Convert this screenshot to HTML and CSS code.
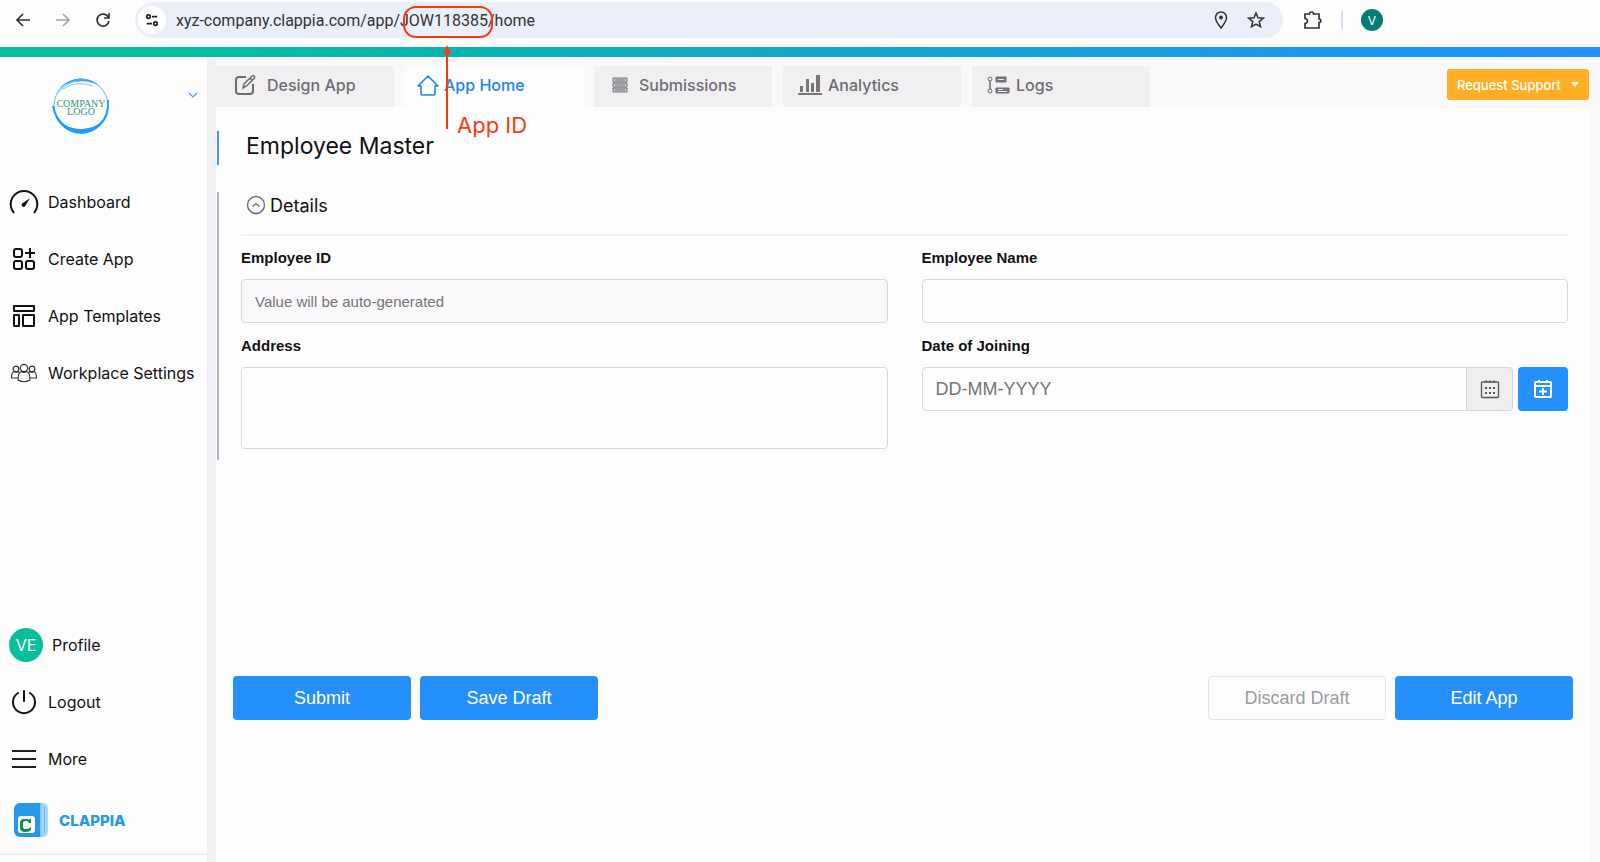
FILE: index.html
```html
<!DOCTYPE html>
<html lang="en">
  <head>
    <meta charset="UTF-8" />
    <meta name="viewport" content="width=device-width, initial-scale=1.0" />
    <title>Employee Master</title>
    <link rel="stylesheet" href="styles.css">
  </head>
  <body>
    <header class="browser-bar">
      <button type="button" class="icon-btn" aria-label="Back">
        <svg width="16" height="16" viewBox="0 0 16 16" fill="none" stroke="#333" stroke-width="1.700"><path d="M15 8H2M8 2L2 8l6 6" /></svg>
      </button>
      <button type="button" class="icon-btn" aria-label="Forward">
        <svg width="16" height="16" viewBox="0 0 16 16" fill="none" stroke="#a5a5a5" stroke-width="1.700"><path d="M1 8h13M8 2l6 6-6 6" /></svg>
      </button>
      <button type="button" class="icon-btn" aria-label="Reload">
        <svg width="16" height="16" viewBox="0 0 16 16" fill="none" stroke="#333" stroke-width="1.700"><path d="M13.500 5.500A6 6 0 1 0 14 9M14 1v5H9" /></svg>
      </button>
      <div class="address-bar">
        <button type="button" class="site-info" aria-label="Site information">
          <svg width="14" height="14" viewBox="0 0 16 16" fill="none" stroke="#222" stroke-width="2"><circle cx="4" cy="4" r="2" /><path d="M8 4h6M2 12h6" /><circle cx="12" cy="12" r="2" /></svg>
        </button>
        <input type="text" class="url" aria-label="Address" value="xyz-company.clappia.com/app/JOW118385/home" />
        <button type="button" class="icon-btn" aria-label="Location">
          <svg width="16" height="20" viewBox="0 0 16 20" fill="none" stroke="#333" stroke-width="1.500"><path d="M8 18C4 13 2.500 10 2.500 7.500a5.500 5.500 0 0 1 11 0C13.500 10 12 13 8 18z" /><circle cx="8" cy="7.500" r="1.200" fill="#333" /></svg>
        </button>
        <button type="button" class="icon-btn" aria-label="Bookmark">
          <svg width="18" height="18" viewBox="0 0 18 18" fill="none" stroke="#333" stroke-width="1.500"><path d="M9 2l2 4.800 5.200.4-4 3.400 1.300 5.100L9 13l-4.500 2.700 1.300-5.100-4-3.400L7 6.800z" /></svg>
        </button>
      </div>
      <button type="button" class="icon-btn extensions" aria-label="Extensions">
        <svg width="20" height="20" viewBox="0 0 20 20" fill="none" stroke="#333" stroke-width="1.700"><path d="M2 4h4.500a2 2 0 0 1 4 0H16v5a1.800 1.800 0 0 1 0 3.600V18H2v-4.500a2.500 2.500 0 0 0 0-5z" /></svg>
      </button>
      <span class="bar-divider"></span>
      <button type="button" class="browser-user">V</button>
    </header>
    <div class="brand-line"></div>

    <div class="app">
      <aside class="sidebar">
        <div class="workplace">
          <svg class="company-logo" width="60" height="60" viewBox="0 0 60 60">
            <circle cx="30" cy="30" r="27" fill="none" stroke="#5bb7f8" />
            <path d="M8 13A28 28 0 0 1 50 11A26 16 0 0 0 8 13z" fill="#3fa9f6" />
            <path d="M12 13Q26 4 42 10M6 18Q14 8 24 5" fill="none" stroke="#7cc5f8" />
            <path d="M3 36A28 28 0 0 0 58 32A28 23 0 0 1 3 36z" fill="#229cf8" />
            <path d="M4 38A27 27 0 0 0 56 38Q48 53 30 53Q12 53 4 38z" fill="#229cf8" />
            <path d="M2 30Q5 44 14 50M57 24Q58 40 49 48" fill="none" stroke="#229cf8" stroke-width="2" />
            <text x="30" y="31" text-anchor="middle" class="logo-text">COMPANY</text>
            <text x="30" y="39" text-anchor="middle" class="logo-text">LOGO</text>
          </svg>
          <button type="button" class="icon-btn workplace-toggle" aria-label="Switch workplace">
            <svg width="10" height="6" viewBox="0 0 10 6" fill="none" stroke="#4a98ec" stroke-width="1.200"><path d="M1 1l4 4 4-4" /></svg>
          </button>
        </div>

        <nav class="side-nav">
          <a href="#">
            <svg width="30" height="26" viewBox="0 0 30 26" fill="none" stroke="#111" stroke-width="2"><path d="M5 24a13.300 13.300 0 1 1 20 0" /><path d="M21 9l-7 5a2 2 0 1 0 2.500 2.500z" fill="#111" stroke="none" /></svg>
            Dashboard
          </a>
          <a href="#">
            <svg width="30" height="26" viewBox="0 0 30 26" fill="none" stroke="#111" stroke-width="2"><rect x="5" y="3" width="8" height="8" rx="2" /><rect x="5" y="15" width="8" height="8" rx="2" /><rect x="17" y="15" width="8" height="8" rx="2" /><path d="M21 2v10M16 7h10" /></svg>
            Create App
          </a>
          <a href="#">
            <svg width="30" height="26" viewBox="0 0 30 26" fill="none" stroke="#111" stroke-width="2" stroke-linejoin="round"><rect x="5" y="3" width="20" height="5" /><rect x="5" y="12" width="5" height="11" /><rect x="14" y="12" width="11" height="11" /></svg>
            App Templates
          </a>
          <a href="#">
            <svg width="30" height="26" viewBox="0 0 30 26" fill="none" stroke="#333" stroke-width="1.200"><circle cx="15" cy="8" r="3.600" /><circle cx="7" cy="9" r="2.800" /><circle cx="23" cy="9" r="2.800" /><path d="M9 20c0-5 1-8 3.500-8.500q2.500 2 5 0C20 12 21 15 21 20q-6 3.500-12 0z" /><path d="M9 18H2.500c0-4 .5-6 2.500-6.500q2 1.200 4 0l1 1M21 18h6.500c0-4-.5-6-2.500-6.500q-2 1.200-4 0l-1 1" /></svg>
            Workplace Settings
          </a>
        </nav>

        <nav class="side-nav side-nav-bottom">
          <a href="#"><span class="avatar">VE</span> Profile</a>
          <a href="#">
            <svg width="30" height="26" viewBox="0 0 30 26" fill="none" stroke="#111" stroke-width="2" stroke-linecap="round"><path d="M9 4a11 11 0 1 0 12 0M15 2v10" /></svg>
            Logout
          </a>
          <a href="#">
            <svg width="30" height="26" viewBox="0 0 30 26" fill="none" stroke="#222" stroke-width="2"><path d="M3 5h24M3 13h24M3 21h24" /></svg>
            More
          </a>
        </nav>
        <a href="#" class="powered-by">
          <svg width="34" height="34" viewBox="0 0 34 34">
            <rect x="10" width="24" height="34" rx="5" fill="#a9d8fa" />
            <rect x="8" width="23" height="34" rx="5" fill="#66b8f3" />
            <rect x="6" width="23" height="34" rx="4" fill="#8ccaf7" />
            <path d="M6 0h20v34H6a6 6 0 0 1-6-6V6a6 6 0 0 1 6-6z" fill="#2598ea" />
            <path d="M29 1v32" stroke="#dceffc" />
            <rect x="4" y="13" width="17" height="17" rx="3" fill="#fff" />
            <path d="M17 16v4h-2q-.5-2-3-2h-1q-2 0-2 2v4q0 2 2 2h1q3 0 5-2v3q-2 2-5 2h-2q-4-.5-4-4v-5q0-4 4-4h3q1 0 1.500.5z" fill="#148a50" />
          </svg>
          CLAPPIA
        </a>
      </aside>

      <main class="main">
        <div class="top-row">
          <nav class="tabs">
            <a href="#" class="tab">
              <svg width="22" height="22" viewBox="0 0 22 22" fill="none" stroke="#6d6d70" stroke-width="2"><path d="M12 3H5a3 3 0 0 0-3 3v11a3 3 0 0 0 3 3h11a3 3 0 0 0 3-3v-7" /><path d="M9 14l1-4 8-8q1-.5 2 0t.5 2l-8 8zM16 4l2 2" stroke-width="1.500" /></svg>
              Design App
            </a>
            <a href="#" class="tab tab-tight active" aria-current="page">
              <svg width="22" height="22" viewBox="0 0 22 22" fill="none" stroke="#1a86f5" stroke-width="1.600" stroke-linejoin="round"><path d="M1 12L11 2l10 10h-3v8q0 1-1 1H5q-1 0-1-1v-8z" /></svg>
              App Home
            </a>
            <a href="#" class="tab">
              <svg width="16" height="16" viewBox="0 0 16 16" fill="none" stroke="#77777a"><path d="M1 1h14v4H1zM1 6h14v4H1zM1 11h14v4H1z" fill="#c9c9cb" /><path d="M3 3h10M3 8h10M3 13h10" /></svg>
              Submissions
            </a>
            <a href="#" class="tab tab-tight">
              <svg width="24" height="20" viewBox="0 0 24 20" fill="#77777a"><path d="M0 18h24v2H0zM2 11h3v6H2zM8 4h3v13H8zM13 8h3v9h-3zM18 0h4v17h-4z" /></svg>
              Analytics
            </a>
            <a href="#" class="tab tab-tight">
              <svg width="23" height="18" viewBox="0 0 23 18" fill="none" stroke="#6d6d70"><circle cx="3" cy="3" r="2" /><circle cx="3" cy="15" r="2" /><path d="M3 5v8" stroke-width="1.500" /><path d="M9 1h10v5H9zM9 12h13v5H9z" fill="#77777a" /><path d="M11 3.500h6M11 13.500h5M11 15.500h9" stroke="#eee" /></svg>
              Logs
            </a>
          </nav>
          <button type="button" class="support-btn">
            Request Support
            <svg width="8" height="5" viewBox="0 0 8 5" fill="#fff"><path d="M0 0h8L4 5z" /></svg>
          </button>
        </div>

        <form class="form">
          <h1 class="form-title">Employee Master</h1>
          <section class="section">
            <h2 class="section-title">
              <button type="button" class="icon-btn" aria-label="Collapse section">
                <svg width="20" height="20" viewBox="0 0 20 20" fill="none" stroke="#666" stroke-width="1.300"><circle cx="10" cy="10" r="8.500" /><path d="M6.500 11.500L10 8.500l3.500 3" /></svg>
              </button>
              Details
            </h2>
            <div class="fields">
              <div class="field">
                <label for="employeeId">Employee ID</label>
                <input type="text" id="employeeId" name="employeeId" placeholder="Value will be auto-generated" disabled />
              </div>
              <div class="field">
                <label for="employeeName">Employee Name</label>
                <input type="text" id="employeeName" name="employeeName" />
              </div>
              <div class="field">
                <label for="address">Address</label>
                <textarea id="address" name="address"></textarea>
              </div>
              <div class="field">
                <label for="joiningDate">Date of Joining</label>
                <div class="date-row">
                  <input type="text" id="joiningDate" name="joiningDate" placeholder="DD-MM-YYYY" />
                  <button type="button" class="date-addon" aria-label="Pick a date">
                    <svg width="20" height="20" viewBox="0 0 20 20" fill="none" stroke="#555"><rect x="1.500" y="3" width="17" height="15.500" rx="1" stroke-width="1.300" /><path d="M6 1v3M10 1v3M14 1v3" /><path d="M5 9h2M9 9h2M13 9h2M5 14h2M9 14h2M13 14h2" stroke-width="2" /></svg>
                  </button>
                  <button type="button" class="date-today" aria-label="Set today">
                    <svg width="20" height="20" viewBox="0 0 20 20" fill="none" stroke="#fff" stroke-width="2"><rect x="2" y="3" width="16" height="15" rx="1" /><path d="M2 7h16M6 1v3M14 1v3M10 9v7M6 12.500h8" /></svg>
                  </button>
                </div>
              </div>
            </div>
          </section>

          <div class="actions">
            <button type="submit" class="btn">Submit</button>
            <button type="button" class="btn">Save Draft</button>
            <button type="button" class="btn btn-outline">Discard Draft</button>
            <button type="button" class="btn">Edit App</button>
          </div>
        </form>
      </main>
    </div>

    <!-- callout on the app id part of the address -->
    <div class="callout">
      <div class="callout-ring"></div>
      <svg class="callout-arrow" width="10" height="84" viewBox="0 0 10 84"><path d="M5 84V5" stroke="#f43c10" stroke-width="2" /><path d="M5 0l4 9H1z" fill="#f43c10" /></svg>
      <span class="callout-text">App ID</span>
    </div>
  </body>
</html>
```

FILE: styles.css
```css
* {
  box-sizing: border-box;
}

body {
  margin: 0;
  min-height: 100vh;
  display: flex;
  flex-direction: column;
  position: relative;
  font-family: Inter, sans-serif;
  font-size: 16px;
  color: #111;
  background-color: #fefdfe;
}

a {
  color: inherit;
  text-decoration: none;
}

button {
  font-family: inherit;
  border: none;
  padding: 0;
  cursor: pointer;
}

svg {
  display: block;
  flex-shrink: 0;
}

.icon-btn {
  background: none;
}

/* browser bar */
.browser-bar {
  display: flex;
  align-items: center;
  gap: 24px;
  height: 47px;
  padding: 0 15px 7px;
}

.address-bar {
  flex: 1;
  max-width: 1148px;
  display: flex;
  align-items: center;
  gap: 18px;
  height: 36px;
  padding: 0 18px 0 3px;
  border-radius: 18px;
  background-color: #ebeffa;
}

.site-info {
  display: flex;
  align-items: center;
  justify-content: center;
  width: 28px;
  height: 28px;
  margin-right: -8px;
  border-radius: 50%;
  background-color: #fff;
}

.url {
  flex: 1;
  border: none;
  padding: 0;
  background: none;
  font-family: Roboto, sans-serif;
  font-size: 16px;
  color: #333;
}

.extensions {
  margin-left: -4px;
}

.bar-divider {
  width: 2px;
  height: 18px;
  margin-left: -6px;
  background-color: #d5def7;
}

.browser-user {
  width: 22px;
  height: 22px;
  margin-left: -6px;
  border-radius: 50%;
  background-color: #067d74;
  color: #fff;
  font-size: 12px;
}

.brand-line {
  height: 10px;
  background: linear-gradient(to right, #00bf9c, #00bf9c 8%, #2090ff);
}

/* sidebar */
.app {
  flex: 1;
  display: flex;
}

.sidebar {
  width: 216px;
  display: flex;
  flex-direction: column;
  padding-bottom: 7px;
  border-right: 9px solid #f1eff2;
}

.workplace {
  display: flex;
  padding: 19px 9px 0 51px;
  margin-bottom: 37px;
}

.workplace-toggle {
  margin: 16px 0 auto auto;
}

.logo-text {
  font-family: "Liberation Serif", serif;
  font-size: 10px;
  fill: #2f9a6c;
}

.side-nav a {
  display: flex;
  align-items: center;
  gap: 9px;
  height: 57px;
  padding-left: 9px;
}

.side-nav-bottom {
  margin-top: auto;
}

.avatar {
  display: flex;
  align-items: center;
  justify-content: center;
  width: 34px;
  height: 34px;
  border-radius: 50%;
  background-color: #06bf9b;
  color: #fff;
}

.powered-by {
  display: flex;
  align-items: center;
  gap: 11px;
  height: 68px;
  padding-left: 14px;
  border-bottom: 2px solid #f1eff2;
  color: #2598ea;
  font-size: 15px;
  font-weight: 800;
}

/* main */
.main {
  flex: 1;
  display: flex;
  flex-direction: column;
  border-right: 10px solid #faf8fb;
}

.top-row {
  display: flex;
  align-items: flex-end;
  justify-content: space-between;
  height: 50px;
  padding-right: 1px;
  background-color: #faf8fb;
}

.tabs {
  display: flex;
  gap: 11px;
}

.tab {
  display: flex;
  align-items: center;
  gap: 11px;
  width: 178px;
  height: 41px;
  padding: 0 0 3px 18px;
  background-color: #f1eff2;
  color: #6d6d70;
  font-weight: 500;
}

.tab-tight {
  gap: 6px;
  padding-left: 15px;
}

.tab.active {
  gap: 5px;
  padding-left: 12px;
  background-color: #fefdfe;
  color: #1a86f5;
}

.support-btn {
  display: flex;
  align-items: center;
  gap: 10px;
  height: 31px;
  margin-bottom: 7px;
  padding: 0 10px;
  border-radius: 3px;
  background-color: #ffae26;
  color: #fff;
  font-size: 13px;
  font-weight: 500;
}

.form {
  flex: 1;
  display: flex;
  flex-direction: column;
  padding: 24px 17px 142px 1px;
}

.form-title {
  margin: 0 0 27px;
  padding: 0 0 4px 27px;
  border-left: 2px solid #4a98ec;
  font-size: 23px;
  font-weight: 400;
  line-height: 30px;
}

.section {
  padding: 0 5px 11px 22px;
  border-left: 2px solid #a9b8c4;
}

.section-title {
  display: flex;
  align-items: center;
  gap: 4px;
  height: 44px;
  margin: 0 0 12px;
  padding: 0 0 16px 5px;
  border-bottom: 2px solid #f3f1f4;
  font-size: 18px;
  font-weight: 400;
}

.fields {
  display: grid;
  grid-template-columns: 1fr 1fr;
  gap: 13px 34px;
}

.field label {
  display: block;
  margin-bottom: 11px;
  font-family: "Liberation Sans", Arial, sans-serif;
  font-size: 15px;
  font-weight: bold;
  line-height: 20px;
}

.field input,
.field textarea {
  display: block;
  width: 100%;
  height: 44px;
  padding: 0 13px;
  border: 1px solid #d9d7dc;
  border-radius: 4px;
  background-color: #fefdfe;
  font-family: "Liberation Sans", Arial, sans-serif;
  font-size: 18px;
}

.field textarea {
  height: 82px;
  resize: none;
}

.field input:disabled {
  background-color: #faf8fb;
  font-size: 15px;
}

.field ::placeholder {
  color: #757575;
}

.date-row {
  display: flex;
}

.date-row input {
  flex: 1;
  border-radius: 4px 0 0 4px;
}

.date-addon,
.date-today {
  display: flex;
  align-items: center;
  justify-content: center;
  width: 46px;
  height: 44px;
  border: 1px solid #d9d7dc;
  border-left: none;
  border-radius: 0 4px 4px 0;
  background-color: #efedf0;
}

.date-today {
  width: 50px;
  margin-left: 5px;
  border: none;
  border-radius: 4px;
  background-color: #2590fb;
}

.actions {
  display: flex;
  gap: 9px;
  margin-top: auto;
  padding-left: 16px;
}

.btn {
  width: 178px;
  height: 44px;
  border-radius: 4px;
  background-color: #2590fb;
  color: #fff;
  font-family: "Liberation Sans", Arial, sans-serif;
  font-size: 18px;
}

.btn-outline {
  margin-left: auto;
  border: 1px solid #e6e4e8;
  background-color: #fefdfe;
  color: #9b9b9e;
}

/* callout drawn over the page */
.callout {
  position: absolute;
  top: 6px;
  left: 403px;
  color: #f43c10;
}

.callout-ring {
  width: 90px;
  height: 32px;
  border: 2px solid #f43c10;
  border-radius: 13px;
}

.callout-arrow {
  margin: 7px 0 0 39px;
}

.callout-text {
  position: absolute;
  top: 104px;
  left: 54px;
  font-size: 22px;
  line-height: 30px;
  white-space: nowrap;
}
```
